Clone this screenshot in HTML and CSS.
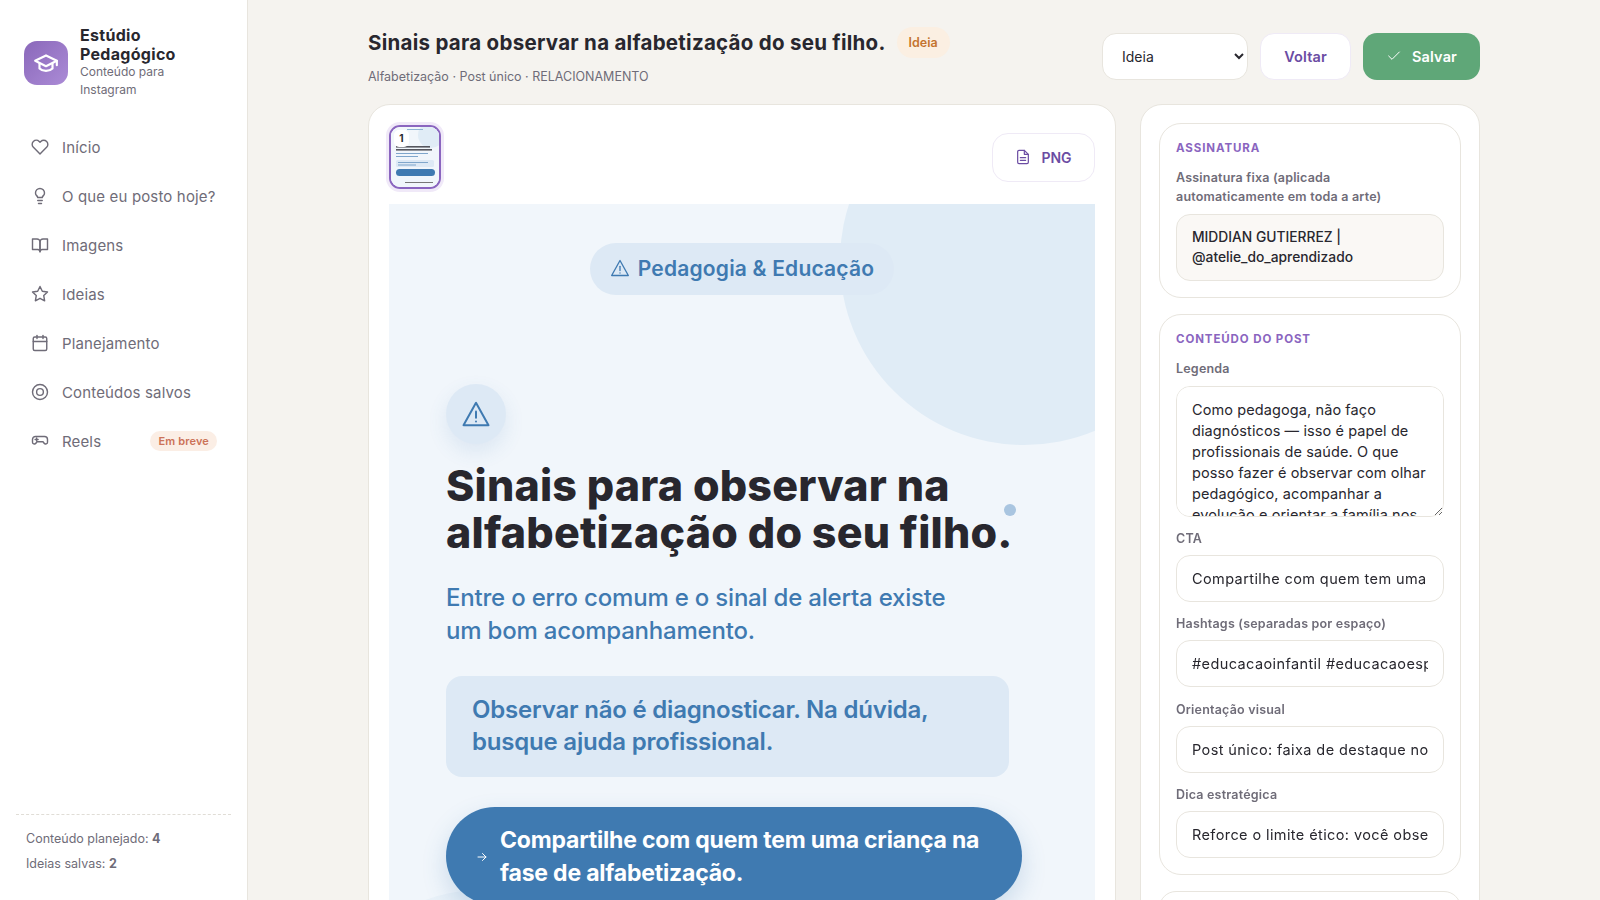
FILE: index.html
```html
<!DOCTYPE html>
<html lang="pt-BR">
<head>
    <meta charset="UTF-8">
    <meta name="viewport" content="width=device-width, initial-scale=1.0">
    <title>Estúdio Pedagógico</title>
    <link rel="stylesheet" href="styles.css">
</head>
<body>
<div class="app">

    <!-- Sidebar -->
    <aside class="sidebar">
        <div class="brand">
            <div class="brand-icon">
                <svg viewBox="0 0 24 24" width="26" height="26"><path d="M2 10l10-5 10 5-10 5z"/><path d="M22 10v4"/><path d="M6 12.500v4.500c3 3 9 3 12 0v-4.500"/></svg>
            </div>
            <div class="brand-text">
                <strong>Estúdio Pedagógico</strong>
                <span>Conteúdo para Instagram</span>
            </div>
        </div>

        <nav class="nav">
            <a href="#" class="nav-item">
                <svg viewBox="0 0 24 24"><path d="M20.84 4.61a5.5 5.5 0 0 0-7.78 0L12 5.67l-1.06-1.06a5.5 5.5 0 0 0-7.78 7.78l1.06 1.06L12 21.23l7.78-7.78 1.06-1.06a5.5 5.5 0 0 0 0-7.78z"/></svg>
                Início
            </a>
            <a href="#" class="nav-item">
                <svg viewBox="0 0 24 24"><path d="M15 14c.2-1 .7-1.7 1.5-2.5 1-.9 1.5-2.2 1.5-3.5A6 6 0 0 0 6 8c0 1 .2 2.2 1.5 3.5.7.7 1.3 1.5 1.5 2.5z"/><path d="M9 18h6"/><path d="M10 22h4"/></svg>
                O que eu posto hoje?
            </a>
            <a href="#" class="nav-item">
                <svg viewBox="0 0 24 24"><path d="M2 4h6a4 4 0 0 1 4 4v13a3 3 0 0 0-3-3H2z"/><path d="M22 4h-6a4 4 0 0 0-4 4v13a3 3 0 0 1 3-3h7z"/></svg>
                Imagens
            </a>
            <a href="#" class="nav-item">
                <svg viewBox="0 0 24 24"><polygon points="12 2 15.09 8.26 22 9.27 17 14.14 18.18 21.02 12 17.77 5.82 21.02 7 14.14 2 9.27 8.91 8.26 12 2"/></svg>
                Ideias
            </a>
            <a href="#" class="nav-item">
                <svg viewBox="0 0 24 24"><rect x="3" y="4" width="18" height="18" rx="2"/><path d="M16 2v4"/><path d="M8 2v4"/><path d="M3 10h18"/></svg>
                Planejamento
            </a>
            <a href="#" class="nav-item">
                <svg viewBox="0 0 24 24"><circle cx="12" cy="12" r="10"/><circle cx="12" cy="12" r="4.5"/></svg>
                Conteúdos salvos
            </a>
            <a href="#" class="nav-item nav-reels">
                <svg viewBox="0 0 24 24"><path d="M6 6h12a4 4 0 0 1 4 4v3.5a2.5 2.5 0 0 1-4.5 1.5L16 13H8l-1.5 2A2.5 2.5 0 0 1 2 13.5V10a4 4 0 0 1 4-4z"/><path d="M5.5 10h4"/><path d="M7.5 8v4"/></svg>
                Reels
                <span class="soon">Em breve</span>
            </a>
        </nav>

        <div class="sidebar-stats">
            <p>Conteúdo planejado: <b>4</b></p>
            <p>Ideias salvas: <b>2</b></p>
        </div>
    </aside>

    <!-- Main content -->
    <main class="main">
        <div class="content">
            <header class="page-head">
                <div>
                    <div class="title-row">
                        <h1>Sinais para observar na alfabetização do seu filho.</h1>
                        <span class="status">Ideia</span>
                    </div>
                    <p class="meta">Alfabetização · Post único · RELACIONAMENTO</p>
                </div>
                <div class="actions">
                    <select class="status-select">
                        <option>Ideia</option>
                        <option>Planejado</option>
                        <option>Publicado</option>
                    </select>
                    <button class="btn btn-light">Voltar</button>
                    <button class="btn btn-save">
                        <svg viewBox="0 0 24 24"><polyline points="20 6 9 17 4 12"/></svg>
                        Salvar
                    </button>
                </div>
            </header>

            <div class="columns">
                <section class="card preview">
                    <div class="preview-top">
                        <div class="thumb">
                            <svg viewBox="0 0 48 60" width="48" height="60">
                                <rect width="48" height="60" fill="#f1f6fb"/>
                                <circle cx="40" cy="8" r="13" fill="#e0ecf6"/>
                                <rect x="16" y="2" width="16" height="1" fill="#8fb2d3"/>
                                <rect x="5" y="19" width="34" height="1.6" fill="#55565e"/>
                                <rect x="5" y="22" width="36" height="1.6" fill="#55565e"/>
                                <rect x="5" y="26" width="32" height="1" fill="#7fa6cb"/>
                                <rect x="5" y="29" width="22" height="1" fill="#7fa6cb"/>
                                <rect x="5" y="33" width="38" height="7" rx="1.5" fill="#dde9f5"/>
                                <rect x="7" y="35" width="30" height="1" fill="#7fa6cb"/>
                                <rect x="7" y="37.500" width="18" height="1" fill="#7fa6cb"/>
                                <rect x="5" y="42" width="39" height="7" rx="3.500" fill="#3f7ab1"/>
                                <rect x="14" y="55" width="28" height="1" fill="#777"/>
                            </svg>
                            <span class="thumb-num">1</span>
                        </div>
                        <button class="btn-png">
                            <svg viewBox="0 0 24 24"><path d="M14 2H6a2 2 0 0 0-2 2v16a2 2 0 0 0 2 2h12a2 2 0 0 0 2-2V8z"/><polyline points="14 2 14 8 20 8"/><path d="M16 13H8"/><path d="M16 17H8"/></svg>
                            PNG
                        </button>
                    </div>

                    <div class="art">
                        <div class="art-circle"></div>
                        <div class="art-circle-low"></div>
                        <div class="art-dot"></div>

                        <div class="art-pill">
                            <svg viewBox="0 0 24 24"><path d="M12 3 2 21h20z"/><path d="M12 10v5"/><path d="M12 18v.01"/></svg>
                            Pedagogia &amp; Educação
                        </div>
                        <div class="art-icon">
                            <svg viewBox="0 0 24 24"><path d="M12 3 2 21h20z"/><path d="M12 10v5"/><path d="M12 18v.01"/></svg>
                        </div>
                        <h2 class="art-title">Sinais para observar na<br>alfabetização do seu filho.</h2>
                        <p class="art-sub">Entre o erro comum e o sinal de alerta existe<br>um bom acompanhamento.</p>
                        <div class="art-note">Observar não é diagnosticar. Na dúvida,<br>busque ajuda profissional.</div>
                        <div class="art-cta">
                            <svg viewBox="0 0 24 24"><path d="M4 12h16"/><path d="M13 5l7 7-7 7"/></svg>
                            <span>Compartilhe com quem tem uma criança na<br>fase de alfabetização.</span>
                        </div>
                    </div>
                </section>

                <section class="card side">
                    <div class="panel">
                        <h3>ASSINATURA</h3>
                        <label>Assinatura fixa (aplicada<br>automaticamente em toda a arte)</label>
                        <div class="signature">MIDDIAN GUTIERREZ | @atelie_do_aprendizado</div>
                    </div>

                    <div class="panel">
                        <h3>CONTEÚDO DO POST</h3>
                        <label for="legenda">Legenda</label>
                        <textarea id="legenda">Como pedagoga, não faço diagnósticos — isso é papel de profissionais de saúde. O que posso fazer é observar com olhar pedagógico, acompanhar a evolução e orientar a família nos próximos passos.</textarea>
                        <label for="cta">CTA</label>
                        <input type="text" id="cta" value="Compartilhe com quem tem uma criança na fase de alfabetização.">
                        <label for="hashtags">Hashtags (separadas por espaço)</label>
                        <input type="text" id="hashtags" value="#educacaoinfantil #educacaoespecial #alfabetizacao">
                        <label for="visual">Orientação visual</label>
                        <input type="text" id="visual" value="Post único: faixa de destaque no topo da arte">
                        <label for="dica">Dica estratégica</label>
                        <input type="text" id="dica" value="Reforce o limite ético: você observa, não diagnostica.">
                    </div>

                    <div class="panel"></div>
                </section>
            </div>
        </div>
    </main>
</div>
</body>
</html>
```

FILE: styles.css
```css
* {
    box-sizing: border-box;
}

body {
    font-family: 'Inter', 'Noto Sans', sans-serif;
    background: #f5f3ef;
    color: #28272e;
    margin: 0;
    height: 100vh;
    overflow: hidden;
}

svg {
    fill: none;
    stroke: currentColor;
    stroke-width: 2;
    stroke-linecap: round;
    stroke-linejoin: round;
    flex-shrink: 0;
}

.app {
    display: flex;
    height: 100vh;
}

/* Sidebar */
.sidebar {
    width: 248px;
    flex-shrink: 0;
    background: #fff;
    border-right: 1px solid #e8e5de;
    display: flex;
    flex-direction: column;
    padding: 26px 16px 0;
}

.brand {
    display: flex;
    align-items: center;
    gap: 12px;
    padding-left: 8px;
    margin-bottom: 27px;
}

.brand-icon {
    width: 44px;
    height: 44px;
    border-radius: 13px;
    background: linear-gradient(135deg, #8a68ba, #ab8bd6);
    color: #fff;
    display: flex;
    align-items: center;
    justify-content: center;
    flex-shrink: 0;
}

.brand-text strong {
    display: block;
    font-size: 16px;
    line-height: 19px;
    font-weight: 700;
    letter-spacing: 0.3px;
}

.brand-text span {
    display: block;
    margin-top: -1px;
    font-size: 12px;
    line-height: 18px;
    color: #6f6c78;
    width: 100px;
}

.nav {
    display: flex;
    flex-direction: column;
    gap: 7px;
}

.nav-item {
    display: flex;
    align-items: center;
    gap: 13px;
    height: 42px;
    padding: 0 14px 0 15px;
    font-size: 15px;
    letter-spacing: 0.15px;
    color: #6f6c78;
    text-decoration: none;
}

.nav-item svg {
    width: 18px;
    height: 18px;
    stroke-width: 1.9;
}

.soon {
    margin-left: auto;
    font-size: 11px;
    font-weight: 600;
    color: #cc7258;
    background: #fbeee5;
    padding: 3px 8px;
    border-radius: 11px;
}

.sidebar-stats {
    margin-top: auto;
    border-top: 1px dashed #e0ddd6;
    padding: 15px 10px 20px;
    font-size: 12.500px;
    color: #6f6c78;
    line-height: 18px;
}

.sidebar-stats p {
    margin: 0 0 7px;
}

/* Main */
.main {
    flex: 1;
    overflow: hidden;
}

.content {
    width: 1112px;
    margin: 0 auto;
    padding-top: 33px;
}

.page-head {
    display: flex;
    justify-content: space-between;
    align-items: flex-start;
    height: 71px;
}

.title-row {
    display: flex;
    align-items: center;
    gap: 11px;
    margin-top: -6px;
}

h1 {
    font-size: 20.500px;
    line-height: 32px;
    font-weight: 700;
    margin: 0;
    letter-spacing: 0.27px;
}

.status {
    font-size: 12.500px;
    font-weight: 600;
    color: #c4742f;
    background: #fbefe2;
    padding: 8px 12px;
    border-radius: 16px;
    margin-top: -1px;
}

.meta {
    margin: 10px 0 0;
    font-size: 12.500px;
    color: #6f6c78;
}

.actions {
    display: flex;
    gap: 12px;
}

.status-select {
    width: 146px;
    height: 47px;
    margin-left: -1px;
    padding: 0 15px;
    font-family: inherit;
    font-size: 14px;
    color: #28272e;
    background: #fff;
    border: 1px solid #e8e5de;
    border-radius: 14px;
}

.btn {
    height: 47px;
    padding-bottom: 2px;
    border-radius: 14px;
    font-family: inherit;
    font-size: 14.500px;
    font-weight: 600;
    letter-spacing: 0.15px;
    display: flex;
    align-items: center;
    justify-content: center;
    gap: 10px;
}

.btn-light {
    width: 91px;
    background: #fff;
    color: #6b4ca3;
    border: 1px solid #efeaf6;
}

.btn-save {
    width: 117px;
    background: #5fa778;
    color: #fff;
    border: none;
}

.btn-save svg {
    width: 16px;
    height: 16px;
    stroke-width: 1.5;
}

.columns {
    display: flex;
    gap: 24px;
    align-items: flex-start;
}

.card {
    background: #fff;
    border: 1px solid #e8e5de;
    border-radius: 22px;
}

/* Preview column */
.preview {
    width: 748px;
    flex-shrink: 0;
    padding: 19px 20px;
}

.preview-top {
    display: flex;
    justify-content: space-between;
    align-items: flex-start;
    height: 80px;
}

.thumb {
    position: relative;
    width: 52px;
    height: 64px;
    margin-top: 1px;
    border: 2px solid #8a65bf;
    border-radius: 11px;
    box-shadow: 0 0 0 3px #f0e9f8;
    overflow: hidden;
}

.thumb svg {
    display: block;
    stroke: none;
}

.thumb-num {
    position: absolute;
    top: 3px;
    left: 3px;
    width: 15px;
    height: 17px;
    background: #fff;
    border-radius: 5px;
    font-size: 10px;
    font-weight: 700;
    line-height: 17px;
    text-align: center;
}

.btn-png {
    width: 103px;
    height: 49px;
    margin-top: 9px;
    padding-bottom: 2px;
    display: flex;
    align-items: center;
    justify-content: center;
    gap: 10px;
    background: #fff;
    color: #6b4ca3;
    border: 1px solid #efeaf6;
    border-radius: 16px;
    font-family: inherit;
    font-size: 14px;
    font-weight: 600;
}

.btn-png svg {
    width: 16px;
    height: 16px;
    stroke-width: 1.8;
}

.art {
    position: relative;
    height: 882px;
    background: #f1f6fb;
    overflow: hidden;
    padding: 39px 57px;
    display: flex;
    flex-direction: column;
    align-items: flex-start;
    color: #3f7ab1;
}

.art > * {
    position: relative;
}

.art .art-circle {
    position: absolute;
    top: -127px;
    right: -113px;
    width: 368px;
    height: 368px;
    border-radius: 50%;
    background: #e0ecf6;
}

.art .art-circle-low {
    position: absolute;
    left: -60px;
    top: 686px;
    width: 300px;
    height: 300px;
    border-radius: 50%;
    background: #e9f1f8;
}

.art .art-dot {
    position: absolute;
    left: 615px;
    top: 300px;
    width: 12px;
    height: 12px;
    border-radius: 50%;
    background: #a9c5e0;
}

.art-pill {
    align-self: center;
    height: 52px;
    padding: 0 20px 2px;
    display: flex;
    align-items: center;
    gap: 8px;
    background: #dde9f5;
    border-radius: 26px;
    font-size: 21px;
    font-weight: 600;
    letter-spacing: 0.2px;
    white-space: nowrap;
}

.art-pill svg {
    width: 20px;
    height: 20px;
    stroke-width: 1.6;
}

.art-icon {
    width: 60px;
    height: 60px;
    margin-top: 89px;
    border-radius: 50%;
    background: #dde9f5;
    box-shadow: 0 8px 20px rgba(63, 122, 177, 0.12);
    display: flex;
    align-items: center;
    justify-content: center;
}

.art-icon svg {
    width: 30px;
    height: 30px;
    stroke-width: 1.6;
}

.art-title {
    margin: 18px 0 0;
    font-size: 43px;
    line-height: 47px;
    font-weight: 800;
    letter-spacing: 0.2px;
    color: #28272e;
    white-space: nowrap;
}

.art-sub {
    margin: 25px 0 0;
    font-size: 24px;
    line-height: 33px;
    font-weight: 500;
    letter-spacing: -0.2px;
    white-space: nowrap;
}

.art-note {
    width: 563px;
    margin-top: 29px;
    padding: 18px 26px 19px;
    background: #dde9f5;
    border-radius: 16px;
    font-size: 24px;
    line-height: 32px;
    font-weight: 600;
    letter-spacing: -0.2px;
    white-space: nowrap;
}

.art-cta {
    width: 576px;
    margin-top: 30px;
    padding: 17px 26px 15px 30px;
    display: flex;
    align-items: center;
    gap: 12px;
    background: #3f7ab1;
    color: #fff;
    border-radius: 56px;
    box-shadow: 0 10px 24px rgba(63, 122, 177, 0.22);
    font-size: 23px;
    line-height: 33px;
    font-weight: 700;
    letter-spacing: -0.2px;
    white-space: nowrap;
}

.art-cta svg {
    width: 12px;
    height: 12px;
}

/* Side column */
.side {
    width: 340px;
    flex-shrink: 0;
    padding: 18px 18px 0;
    display: flex;
    flex-direction: column;
    gap: 16px;
    height: 900px;
}

.panel {
    border: 1px solid #e8e5de;
    border-radius: 22px;
    padding: 16px;
    display: flex;
    flex-direction: column;
}

.panel h3 {
    margin: 0 0 12px;
    font-size: 11.500px;
    line-height: 16px;
    font-weight: 700;
    letter-spacing: 0.9px;
    color: #8a65bf;
}

.panel label {
    display: block;
    font-size: 12.500px;
    line-height: 19px;
    font-weight: 600;
    letter-spacing: 0.2px;
    color: #6f6c78;
    margin-bottom: 7px;
}

.signature {
    padding: 12px 15px 13px;
    margin-top: 1px;
    background: #faf8f5;
    border: 1px solid #e8e5de;
    border-radius: 14px;
    font-size: 13.800px;
    line-height: 20px;
    font-weight: 500;
}

textarea,
input[type="text"] {
    display: block;
    width: 100%;
    padding: 0 15px;
    font-family: inherit;
    font-size: 14.500px;
    color: #28272e;
    background: #fff;
    border: 1px solid #e8e5de;
    border-radius: 14px;
}

textarea {
    height: 131px;
    padding-top: 12px;
    margin-top: 1px;
    line-height: 21px;
    letter-spacing: 0.1px;
    resize: vertical;
    margin-bottom: 12px;
}

input[type="text"] {
    height: 47px;
    letter-spacing: 0.4px;
    margin-bottom: 12.300px;
}

.panel input:last-child {
    margin-bottom: 0;
}
```
